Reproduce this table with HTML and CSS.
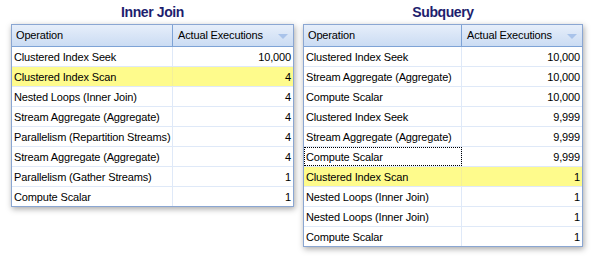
FILE: index.html
```html
<!DOCTYPE html>
<html>
<head>
<meta charset="utf-8">
<link rel="stylesheet" href="styles.css">
</head>
<body>
<div class="page">
  <section class="panel panel-left">
    <h2 class="title">Inner Join</h2>
    <div class="grid">
      <div class="row head"><div class="c1">Operation</div><div class="c2">Actual Executions<span class="arrow"></span></div></div>
      <div class="row"><div class="c1">Clustered Index Seek</div><div class="c2">10,000</div></div>
      <div class="row hl"><div class="c1">Clustered Index Scan</div><div class="c2">4</div></div>
      <div class="row"><div class="c1">Nested Loops (Inner Join)</div><div class="c2">4</div></div>
      <div class="row"><div class="c1">Stream Aggregate (Aggregate)</div><div class="c2">4</div></div>
      <div class="row"><div class="c1">Parallelism (Repartition Streams)</div><div class="c2">4</div></div>
      <div class="row"><div class="c1">Stream Aggregate (Aggregate)</div><div class="c2">4</div></div>
      <div class="row"><div class="c1">Parallelism (Gather Streams)</div><div class="c2">1</div></div>
      <div class="row"><div class="c1">Compute Scalar</div><div class="c2">1</div></div>
    </div>
  </section>
  <section class="panel panel-right">
    <h2 class="title">Subquery</h2>
    <div class="grid">
      <div class="row head"><div class="c1">Operation</div><div class="c2">Actual Executions<span class="arrow"></span></div></div>
      <div class="row"><div class="c1">Clustered Index Seek</div><div class="c2">10,000</div></div>
      <div class="row"><div class="c1">Stream Aggregate (Aggregate)</div><div class="c2">10,000</div></div>
      <div class="row"><div class="c1">Compute Scalar</div><div class="c2">10,000</div></div>
      <div class="row"><div class="c1">Clustered Index Seek</div><div class="c2">9,999</div></div>
      <div class="row"><div class="c1">Stream Aggregate (Aggregate)</div><div class="c2">9,999</div></div>
      <div class="row"><div class="c1 focus">Compute Scalar</div><div class="c2">9,999</div></div>
      <div class="row hl"><div class="c1">Clustered Index Scan</div><div class="c2">1</div></div>
      <div class="row"><div class="c1">Nested Loops (Inner Join)</div><div class="c2">1</div></div>
      <div class="row"><div class="c1">Nested Loops (Inner Join)</div><div class="c2">1</div></div>
      <div class="row"><div class="c1">Compute Scalar</div><div class="c2">1</div></div>
    </div>
  </section>
</div>
</body>
</html>
```
FILE: styles.css
```css
html, body {
  margin: 0;
  padding: 0;
  background: #ffffff;
}
body {
  width: 592px;
  height: 258px;
  overflow: hidden;
  font-family: "Liberation Sans", Arial, sans-serif;
  font-size: 11px;
  color: #000;
}
.page {
  display: flex;
  align-items: flex-start;
  padding-left: 11px;
  gap: 9px;
}
.panel {
  display: flex;
  flex-direction: column;
}
.panel-left { width: 283px; }
.panel-right { width: 280px; }
.title {
  margin: 0;
  height: 24px;
  line-height: 24px;
  text-align: center;
  font-family: "Liberation Sans", Arial, sans-serif;
  font-weight: bold;
  font-size: 14px;
  letter-spacing: -0.4px;
  color: #1e1e6e;
}
.grid {
  border: 1px solid #8aa6d2;
  background: #fff;
  box-shadow: 1px 2px 6px rgba(0,0,0,0.35);
}
.row {
  display: flex;
  height: 20px;
  box-sizing: border-box;
  border-bottom: 1px solid #dfe9f8;
}
.row:last-child { border-bottom: none; height: 19px; }
.c1, .c2 {
  box-sizing: border-box;
  line-height: 20px;
  white-space: nowrap;
  overflow: hidden;
  letter-spacing: -0.15px;
}
.c1 {
  padding-left: 2px;
  border-right: 1px solid #dfe9f8;
}
.panel-left .c1 { width: 161px; }
.panel-right .c1 { width: 158px; }
.c2 {
  flex: 1;
  text-align: right;
  padding-right: 2px;
}
.head {
  height: 22px;
  background: linear-gradient(#e6eefa, #cbdcf3);
  border-bottom: 1px solid #7ea3d6;
}
.head .c1, .head .c2 { line-height: 21px; }
.head .c1 {
  padding-left: 4px;
  border-right: 1px solid #7ea3d6;
}
.head .c2 {
  text-align: left;
  padding-left: 5px;
  position: relative;
}
.arrow {
  position: absolute;
  right: 5px;
  top: 9px;
  width: 0;
  height: 0;
  border-left: 5px solid transparent;
  border-right: 5px solid transparent;
  border-top: 5px solid #a9c3ea;
}
.hl { background: #fefb8c; }
.hl .c1 { border-right-color: #f3f09a; }
.focus {
  outline: 1px dotted #000;
  outline-offset: -1px;
}
```
